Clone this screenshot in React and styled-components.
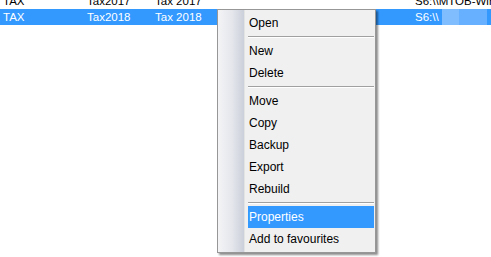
import React from 'react'
import styled, { createGlobalStyle } from 'styled-components'

const Global = createGlobalStyle`
  html, body {
    margin: 0;
    padding: 0;
    background: #fff;
    overflow: hidden;
  }
`

const rows = [
  { cells: ['TAX', 'Tax2017', 'Tax 2017', 'S6:\\\\MTOB-Win'], selected: false },
  { cells: ['TAX', 'Tax2018', 'Tax 2018', 'S6:\\\\'], selected: true },
]

const menu = [
  { label: 'Open' },
  { sep: true },
  { label: 'New' },
  { label: 'Delete' },
  { sep: true },
  { label: 'Move' },
  { label: 'Copy' },
  { label: 'Backup' },
  { label: 'Export' },
  { label: 'Rebuild' },
  { sep: true },
  { label: 'Properties', active: true },
  { label: 'Add to favourites' },
]

const App = () => {
  return (
    <Screen>
      <Global />
      <List>
        {rows.map((r, i) => (
          <Row key={i} $selected={r.selected}>
            <Cell $w={84}>{r.cells[0]}</Cell>
            <Cell $w={68}>{r.cells[1]}</Cell>
            <Cell $w={260}>{r.cells[2]}</Cell>
            <Cell $w={76}>
              {r.cells[3]}
              {r.selected && (
                <Redact>
                  <span className="a" />
                  <span className="b" />
                  <span className="n">N</span>
                </Redact>
              )}
            </Cell>
          </Row>
        ))}
      </List>

      <Menu>
        <Gutter />
        <Items>
          {menu.map((m, i) =>
            m.sep ? <Separator key={i} /> : <Item key={i} $active={m.active}>{m.label}</Item>
          )}
        </Items>
      </Menu>
    </Screen>
  )
}

export default App

const Screen = styled.div`
  position: relative;
  width: 491px;
  height: 257px;
  overflow: hidden;
  background: #fff;
`

const List = styled.div`
  display: flex;
  flex-direction: column;
  margin-top: -7px;
`

const Row = styled.div`
  display: flex;
  height: 16px;
  align-items: center;
  padding-left: 3px;
  background: ${p => (p.$selected ? '#3399ff' : '#fff')};
  color: ${p => (p.$selected ? '#fff' : '#000')};
  font-family: "Liberation Sans", Arial, sans-serif;
  font-size: 11.5px;
  white-space: nowrap;
`

const Cell = styled.div`
  flex: 0 0 ${p => p.$w}px;
  display: flex;
  align-items: center;
  overflow: visible;
`

const Redact = styled.span`
  display: flex;
  align-items: center;
  margin-left: 3px;
  height: 16px;

  .a {
    width: 17px;
    height: 16px;
    background: #80bdff;
  }
  .b {
    width: 28px;
    height: 16px;
    background: #66b0ff;
  }
  .n {
    margin-left: 5px;
  }
`

const Menu = styled.div`
  position: absolute;
  left: 217px;
  top: 9px;
  width: 157px;
  height: 242px;
  display: flex;
  background: #f0f0f0;
  border: 1px solid #979797;
  box-shadow: 2px 2px 2px rgba(0, 0, 0, 0.45);
  font-family: "Liberation Sans", Arial, sans-serif;
  font-size: 12px;
  color: #000;
`

const Gutter = styled.div`
  flex: 0 0 26px;
  background: linear-gradient(to right, #f4f4f6 0%, #e4e6ec 55%, #cbcfd9 100%);
  border-right: 1px solid #e2e3e3;
`

const Items = styled.div`
  flex: 1;
  display: flex;
  flex-direction: column;
  padding: 2px 1px 2px 3px;
`

const Item = styled.div`
  height: 22px;
  line-height: 22px;
  padding-left: 1px;
  background: ${p => (p.$active ? '#3399ff' : 'transparent')};
  color: ${p => (p.$active ? '#fff' : '#000')};
`

const Separator = styled.div`
  height: 0;
  margin: 2px 0 2px;
  border-top: 1px solid #a0a0a0;
  border-bottom: 1px solid #fff;
`
